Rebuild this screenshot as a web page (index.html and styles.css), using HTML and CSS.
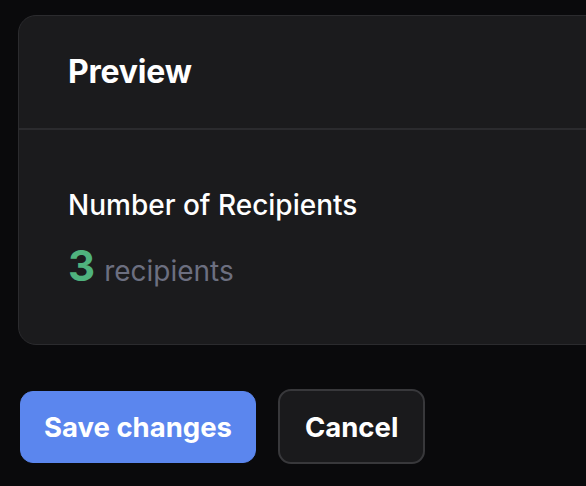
FILE: index.html
```html
<!DOCTYPE html>
<html>
<head>
<meta charset="utf-8">
<link rel="stylesheet" href="styles.css">
</head>
<body>
<div class="page">
  <section class="card">
    <header class="card-header">
      <h2 class="card-title">Preview</h2>
    </header>
    <div class="card-body">
      <div class="field-label">Number of Recipients</div>
      <div class="count-row">
        <span class="count">3</span>
        <span class="count-unit">recipients</span>
      </div>
    </div>
  </section>
  <div class="actions">
    <button class="btn btn-primary">Save changes</button>
    <button class="btn btn-secondary">Cancel</button>
  </div>
</div>
</body>
</html>
```
FILE: styles.css
```css
html, body {
  margin: 0;
  padding: 0;
  background: #0a0a0c;
  font-family: Inter, "Noto Sans", sans-serif;
  color: #ffffff;
}
.page {
  padding: 15px 0 0 18px;
  height: 486px;
  box-sizing: border-box;
  overflow: hidden;
}
.card {
  background: #1b1b1d;
  border: 1.5px solid #2b2b2e;
  border-radius: 18px;
  margin-right: -40px;
}
.card-header {
  height: 114px;
  box-sizing: border-box;
  display: flex;
  align-items: center;
  padding: 0 0 0 49px;
  border-bottom: 2px solid #2b2b2e;
}
.card-title {
  margin: 0;
  font-size: 32px;
  font-weight: 700;
  letter-spacing: -0.2px;
  padding-bottom: 2px;
}
.card-body {
  padding: 58px 0 56px 49px;
}
.field-label {
  font-size: 28px;
  font-weight: 500;
  line-height: 34px;
}
.count-row {
  display: flex;
  align-items: baseline;
  gap: 9px;
  margin-top: 22px;
}
.count {
  font-size: 42px;
  font-weight: 700;
  color: #4fb27e;
  line-height: 44px;
}
.count-unit {
  font-size: 28px;
  color: #6c6f80;
}
.actions {
  display: flex;
  gap: 22px;
  margin-top: 44px;
  padding-left: 2px;
  align-items: center;
}
.btn {
  font-family: Inter, "Noto Sans", sans-serif;
  font-size: 27.5px;
  font-weight: 700;
  color: #ffffff;
  border-radius: 13px;
  height: 72px;
  padding: 0 23px;
  cursor: pointer;
}
.btn-primary {
  background: #5b86ee;
  border: 1px solid #5b86ee;
}
.btn-secondary {
  background: #1a1a1c;
  border: 2px solid #38383b;
  height: 75px;
  padding: 0 25px;
}
```
